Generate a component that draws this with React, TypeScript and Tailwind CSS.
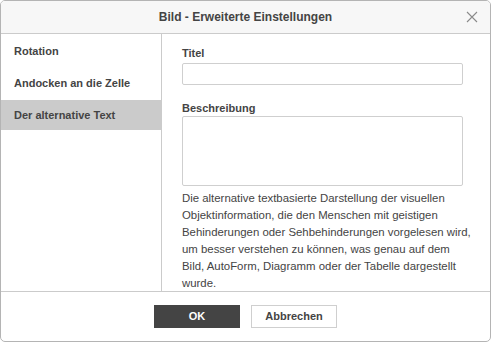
import { useState } from 'react';

const menu = ['Rotation', 'Andocken an die Zelle', 'Der alternative Text'];

export default function App() {
  const [active, setActive] = useState(2);
  const [title, setTitle] = useState('');
  const [desc, setDesc] = useState('');

  return (
    <div className="w-[491px] h-[342px] bg-white font-['Liberation_Sans',Arial,sans-serif] text-[#444]">
      <div className="flex flex-col h-full border border-[#b4b4b4] rounded-[5px] overflow-hidden">
        <div className="relative h-[33px] shrink-0 flex items-center justify-center bg-[#f7f7f7] border-b border-[#cbcbcb]">
          <span className="text-[12px] font-bold text-[#444]">Bild - Erweiterte Einstellungen</span>
          <button className="absolute right-[12px] top-[10px] w-[12px] h-[12px]">
            <svg width="12" height="12" viewBox="0 0 12 12">
              <path d="M1 1L11 11M11 1L1 11" stroke="#8a8a8a" strokeWidth="1.1" fill="none" />
            </svg>
          </button>
        </div>

        <div className="flex flex-1 min-h-0">
          <div className="w-[161px] shrink-0 border-r border-[#cbcbcb] pt-[2px] flex flex-col gap-[2px]">
            {menu.map((m, i) => (
              <div
                key={m}
                onClick={() => setActive(i)}
                className={`h-[30px] flex items-center pl-[13px] text-[11px] font-bold cursor-pointer ${
                  i === active ? 'bg-[#cbcbcb]' : ''
                }`}
              >
                {m}
              </div>
            ))}
          </div>

          <div className="flex-1 pl-[20px] pr-[27px] pt-[12px]">
            <label className="block text-[11px] font-bold leading-[14px] mb-[3px]">Titel</label>
            <input
              value={title}
              onChange={(e) => setTitle(e.target.value)}
              className="block w-full h-[22px] border border-[#cfcfcf] rounded-[2px] px-[3px] text-[11px] outline-none"
            />
            <label className="block text-[11px] font-bold leading-[14px] mt-[16px] mb-[1px]">Beschreibung</label>
            <textarea
              value={desc}
              onChange={(e) => setDesc(e.target.value)}
              className="block w-full h-[70px] border border-[#cfcfcf] rounded-[2px] px-[3px] text-[11px] outline-none resize-none"
            />
            <p className="mt-[4px] mr-[-20px] whitespace-nowrap text-[11.4px] leading-[17px] text-[#444]">
              Die alternative textbasierte Darstellung der visuellen
              <br />
              Objektinformation, die den Menschen mit geistigen
              <br />
              Behinderungen oder Sehbehinderungen vorgelesen wird,
              <br />
              um besser verstehen zu können, was genau auf dem
              <br />
              Bild, AutoForm, Diagramm oder der Tabelle dargestellt
              <br />
              wurde.
            </p>
          </div>
        </div>

        <div className="h-[50px] shrink-0 border-t border-[#cbcbcb] flex items-center justify-center gap-[11px]">
          <button className="w-[86px] h-[23px] bg-[#444] border border-[#444] text-white text-[11px] font-bold">OK</button>
          <button className="w-[86px] h-[23px] bg-white border border-[#cfcfcf] text-[#444] text-[11px] font-bold">
            Abbrechen
          </button>
        </div>
      </div>
    </div>
  );
}
